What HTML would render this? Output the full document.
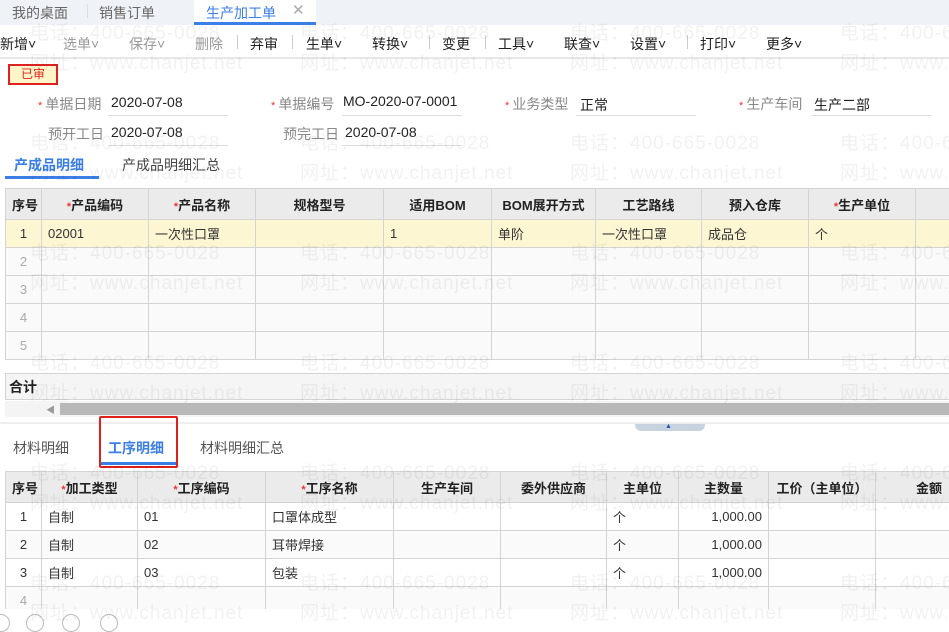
<!DOCTYPE html>
<html><head><meta charset="utf-8">
<style>
*{margin:0;padding:0;box-sizing:border-box}
body{width:949px;height:621px;overflow:hidden;background:#fff;font-family:"Liberation Sans","Noto Sans CJK SC",sans-serif;font-size:14px;color:#333;position:relative}
.a{position:absolute;white-space:nowrap}
.wm{position:absolute;color:rgba(0,0,0,0.055);font-size:19px;white-space:nowrap;z-index:5;pointer-events:none;letter-spacing:1px}
.star{color:#e33;font-size:11px}
table{border-collapse:collapse;position:absolute;table-layout:fixed}
td,th{border:1px solid #d4d4d4;font-size:13px;height:28px;padding:0 6px;white-space:nowrap;overflow:hidden}
th{background:#ebebeb;font-weight:bold;color:#222;text-align:center}
.g{color:#aaa;text-align:center}
.c{text-align:center}
.r{text-align:right}
.tb{color:#222}
.tbd{color:#999}
.sep{position:absolute;width:1px;height:14px;background:#ccc;top:35px}
.ul{position:absolute;height:1px;background:#ddd}
</style></head><body>
<div class="a" style="left:0;top:0;width:949px;height:25px;background:#eff2f7"></div>
<div class="a" style="left:12px;top:3px;color:#666">我的桌面</div>
<div class="a" style="left:87px;top:4px;width:1px;height:14px;background:#ddd"></div>
<div class="a" style="left:99px;top:3px;color:#666">销售订单</div>
<div class="a" style="left:194px;top:0;width:122px;height:25px;background:#fff"></div>
<div class="a" style="left:206px;top:3px;color:#3a7ee8">生产加工单</div>
<div class="a" style="left:292px;top:1px;color:#aaa;font-size:15px">✕</div>
<div class="a" style="left:194px;top:22px;width:122px;height:3px;background:#3a7ee8"></div>
<div class="a" style="left:0;top:57px;width:949px;height:2px;background:#e8e8e8"></div>
<div class="a tb" style="left:0;top:34px">新增˅</div>
<div class="a tbd" style="left:63px;top:34px">选单˅</div>
<div class="a tbd" style="left:129px;top:34px">保存˅</div>
<div class="a tbd" style="left:195px;top:34px">删除</div>
<div class="sep" style="left:237px"></div>
<div class="a tb" style="left:250px;top:34px">弃审</div>
<div class="sep" style="left:292px"></div>
<div class="a tb" style="left:306px;top:34px">生单˅</div>
<div class="a tb" style="left:372px;top:34px">转换˅</div>
<div class="sep" style="left:429px"></div>
<div class="a tb" style="left:442px;top:34px">变更</div>
<div class="sep" style="left:485px"></div>
<div class="a tb" style="left:498px;top:34px">工具˅</div>
<div class="a tb" style="left:564px;top:34px">联查˅</div>
<div class="a tb" style="left:630px;top:34px">设置˅</div>
<div class="sep" style="left:687px"></div>
<div class="a tb" style="left:700px;top:34px">打印˅</div>
<div class="a tb" style="left:766px;top:34px">更多˅</div>
<div class="a" style="left:8px;top:64px;width:50px;height:21px;background:#fff5c8;border:2px solid #d22;color:#d22;font-size:12px;text-align:center;line-height:17px">已审</div>
<div class="a" style="left:38px;top:94px;color:#888"><span class="star">* </span>单据日期</div>
<div class="a" style="left:111px;top:94px;color:#222">2020-07-08</div>
<div class="ul" style="left:108px;top:115px;width:120px"></div>
<div class="a" style="left:271px;top:94px;color:#888"><span class="star">* </span>单据编号</div>
<div class="a" style="left:343px;top:93px;color:#222">MO-2020-07-0001</div>
<div class="ul" style="left:342px;top:115px;width:120px"></div>
<div class="a" style="left:505px;top:94px;color:#888"><span class="star">* </span>业务类型</div>
<div class="a" style="left:580px;top:95px;color:#222">正常</div>
<div class="ul" style="left:576px;top:115px;width:120px"></div>
<div class="a" style="left:739px;top:94px;color:#888"><span class="star">* </span>生产车间</div>
<div class="a" style="left:814px;top:95px;color:#222">生产二部</div>
<div class="ul" style="left:811px;top:115px;width:120px"></div>
<div class="a" style="left:48px;top:124px;color:#888">预开工日</div>
<div class="a" style="left:111px;top:124px;color:#222">2020-07-08</div>
<div class="ul" style="left:108px;top:145px;width:120px"></div>
<div class="a" style="left:283px;top:124px;color:#888">预完工日</div>
<div class="a" style="left:345px;top:124px;color:#222">2020-07-08</div>
<div class="ul" style="left:342px;top:145px;width:120px"></div>
<div class="a" style="left:14px;top:155px;color:#3a7ee8;font-weight:bold">产成品明细</div>
<div class="a" style="left:122px;top:155px;color:#444">产成品明细汇总</div>
<div class="a" style="left:5px;top:176px;width:94px;height:3px;background:#3a7ee8"></div>
<table style="left:5px;top:188px;width:960px">
<colgroup><col style="width:36px"><col style="width:107px"><col style="width:107px"><col style="width:128px"><col style="width:108px"><col style="width:104px"><col style="width:106px"><col style="width:107px"><col style="width:107px"><col style="width:50px"></colgroup>
<tr style="height:31px"><th>序号</th><th><span class="star">*</span>产品编码</th><th><span class="star">*</span>产品名称</th><th>规格型号</th><th>适用BOM</th><th>BOM展开方式</th><th>工艺路线</th><th>预入仓库</th><th><span class="star">*</span>生产单位</th><th></th></tr>
<tr style="background:#fdf6d2"><td class="c">1</td><td>02001</td><td>一次性口罩</td><td></td><td>1</td><td>单阶</td><td>一次性口罩</td><td>成品仓</td><td>个</td><td></td></tr>
<tr style="background:#fafafa"><td class="g">2</td><td></td><td></td><td></td><td></td><td></td><td></td><td></td><td></td><td></td></tr>
<tr style="background:#fafafa"><td class="g">3</td><td></td><td></td><td></td><td></td><td></td><td></td><td></td><td></td><td></td></tr>
<tr style="background:#fafafa"><td class="g">4</td><td></td><td></td><td></td><td></td><td></td><td></td><td></td><td></td><td></td></tr>
<tr style="background:#fafafa"><td class="g">5</td><td></td><td></td><td></td><td></td><td></td><td></td><td></td><td></td><td></td></tr>
</table>
<div class="a" style="left:5px;top:373px;width:950px;height:27px;background:#f5f5f5;border:1px solid #d4d4d4"></div>
<div class="a" style="left:9px;top:377px;color:#222;font-weight:bold">合计</div>
<div class="a" style="left:5px;top:401px;width:944px;height:16px;background:#f4f4f4"></div>
<div class="a" style="left:46px;top:403px;color:#999;font-size:9px">◀</div>
<div class="a" style="left:60px;top:403px;width:889px;height:12px;background:#b8b8b8"></div>
<div class="a" style="left:0;top:422px;width:949px;height:2px;background:#eee"></div>
<div class="a" style="left:635px;top:424px;width:70px;height:7px;background:#c8d3e0;border-radius:0 0 6px 6px"></div>
<div class="a" style="left:665px;top:423px;color:#2a5aa8;font-size:7px">▲</div>
<div class="a" style="left:13px;top:438px;color:#555">材料明细</div>
<div class="a" style="left:108px;top:438px;color:#3a7ee8;font-weight:bold">工序明细</div>
<div class="a" style="left:200px;top:438px;color:#555">材料明细汇总</div>
<div class="a" style="left:101px;top:462px;width:76px;height:3px;background:#3a7ee8"></div>
<div class="a" style="left:99px;top:416px;width:79px;height:52px;border:2px solid #e0201a;border-radius:2px"></div>
<table style="left:5px;top:471px;width:990px">
<colgroup><col style="width:36px"><col style="width:96px"><col style="width:128px"><col style="width:128px"><col style="width:107px"><col style="width:106px"><col style="width:72px"><col style="width:90px"><col style="width:107px"><col style="width:120px"></colgroup>
<tr style="height:31px"><th>序号</th><th><span class="star">*</span>加工类型</th><th><span class="star">*</span>工序编码</th><th><span class="star">*</span>工序名称</th><th>生产车间</th><th>委外供应商</th><th>主单位</th><th>主数量</th><th>工价（主单位）</th><th style="text-align:left;padding-left:40px">金额</th></tr>
<tr><td class="c">1</td><td>自制</td><td>01</td><td>口罩体成型</td><td></td><td></td><td>个</td><td class="r">1,000.00</td><td></td><td></td></tr>
<tr style="background:#fafafa"><td class="c">2</td><td>自制</td><td>02</td><td>耳带焊接</td><td></td><td></td><td>个</td><td class="r">1,000.00</td><td></td><td></td></tr>
<tr><td class="c">3</td><td>自制</td><td>03</td><td>包装</td><td></td><td></td><td>个</td><td class="r">1,000.00</td><td></td><td></td></tr>
<tr style="background:#fafafa"><td class="g">4</td><td></td><td></td><td></td><td></td><td></td><td></td><td></td><td></td><td></td></tr>
</table>
<div class="a" style="left:0;top:609px;width:949px;height:12px;background:#fff"></div>
<div class="a" style="left:-8px;top:614px;width:18px;height:18px;border:1px solid #bbb;border-radius:50%"></div>
<div class="a" style="left:26px;top:614px;width:18px;height:18px;border:1px solid #bbb;border-radius:50%"></div>
<div class="a" style="left:62px;top:614px;width:18px;height:18px;border:1px solid #bbb;border-radius:50%"></div>
<div class="a" style="left:100px;top:614px;width:18px;height:18px;border:1px solid #bbb;border-radius:50%"></div>
<div class="wm" style="left:30px;top:18px">电话：400-665-0028</div><div class="wm" style="left:300px;top:18px">电话：400-665-0028</div><div class="wm" style="left:570px;top:18px">电话：400-665-0028</div><div class="wm" style="left:840px;top:18px">电话：400-665-0028</div>
<div class="wm" style="left:30px;top:48px">网址：www.chanjet.net</div><div class="wm" style="left:300px;top:48px">网址：www.chanjet.net</div><div class="wm" style="left:570px;top:48px">网址：www.chanjet.net</div><div class="wm" style="left:840px;top:48px">网址：www.chanjet.net</div>
<div class="wm" style="left:30px;top:128px">电话：400-665-0028</div><div class="wm" style="left:300px;top:128px">电话：400-665-0028</div><div class="wm" style="left:570px;top:128px">电话：400-665-0028</div><div class="wm" style="left:840px;top:128px">电话：400-665-0028</div>
<div class="wm" style="left:30px;top:158px">网址：www.chanjet.net</div><div class="wm" style="left:300px;top:158px">网址：www.chanjet.net</div><div class="wm" style="left:570px;top:158px">网址：www.chanjet.net</div><div class="wm" style="left:840px;top:158px">网址：www.chanjet.net</div>
<div class="wm" style="left:30px;top:238px">电话：400-665-0028</div><div class="wm" style="left:300px;top:238px">电话：400-665-0028</div><div class="wm" style="left:570px;top:238px">电话：400-665-0028</div><div class="wm" style="left:840px;top:238px">电话：400-665-0028</div>
<div class="wm" style="left:30px;top:268px">网址：www.chanjet.net</div><div class="wm" style="left:300px;top:268px">网址：www.chanjet.net</div><div class="wm" style="left:570px;top:268px">网址：www.chanjet.net</div><div class="wm" style="left:840px;top:268px">网址：www.chanjet.net</div>
<div class="wm" style="left:30px;top:348px">电话：400-665-0028</div><div class="wm" style="left:300px;top:348px">电话：400-665-0028</div><div class="wm" style="left:570px;top:348px">电话：400-665-0028</div><div class="wm" style="left:840px;top:348px">电话：400-665-0028</div>
<div class="wm" style="left:30px;top:378px">网址：www.chanjet.net</div><div class="wm" style="left:300px;top:378px">网址：www.chanjet.net</div><div class="wm" style="left:570px;top:378px">网址：www.chanjet.net</div><div class="wm" style="left:840px;top:378px">网址：www.chanjet.net</div>
<div class="wm" style="left:30px;top:458px">电话：400-665-0028</div><div class="wm" style="left:300px;top:458px">电话：400-665-0028</div><div class="wm" style="left:570px;top:458px">电话：400-665-0028</div><div class="wm" style="left:840px;top:458px">电话：400-665-0028</div>
<div class="wm" style="left:30px;top:488px">网址：www.chanjet.net</div><div class="wm" style="left:300px;top:488px">网址：www.chanjet.net</div><div class="wm" style="left:570px;top:488px">网址：www.chanjet.net</div><div class="wm" style="left:840px;top:488px">网址：www.chanjet.net</div>
<div class="wm" style="left:30px;top:568px">电话：400-665-0028</div><div class="wm" style="left:300px;top:568px">电话：400-665-0028</div><div class="wm" style="left:570px;top:568px">电话：400-665-0028</div><div class="wm" style="left:840px;top:568px">电话：400-665-0028</div>
<div class="wm" style="left:30px;top:598px">网址：www.chanjet.net</div><div class="wm" style="left:300px;top:598px">网址：www.chanjet.net</div><div class="wm" style="left:570px;top:598px">网址：www.chanjet.net</div><div class="wm" style="left:840px;top:598px">网址：www.chanjet.net</div>
</body></html>
